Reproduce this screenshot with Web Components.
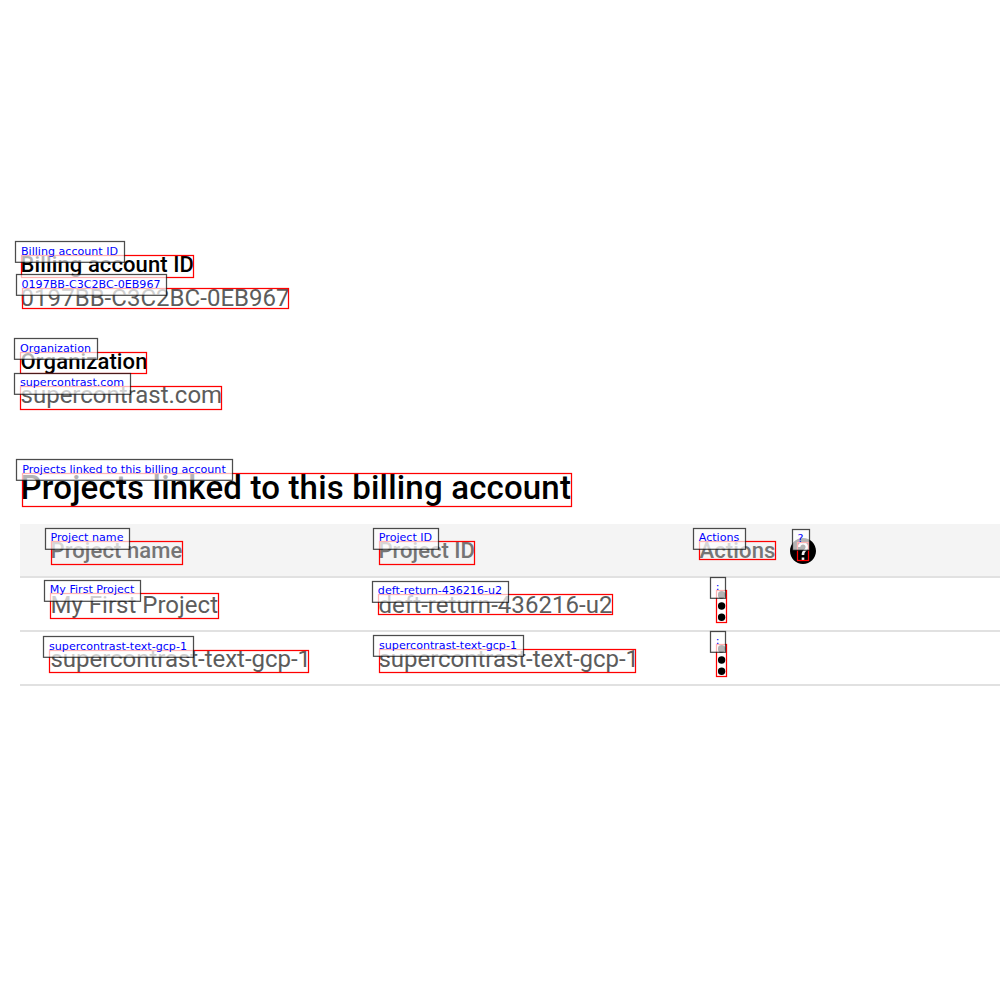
<!DOCTYPE html>
<html lang="en"><head><meta charset="utf-8"><title>Billing account</title>
<style>html,body{margin:0;background:#fff}body{width:1000px;height:1000px;overflow:hidden;position:relative}</style></head>
<body>
<billing-page></billing-page>
<script>
// <ocr-mark>: slotted content plus its detection rectangle and label.
// box = "x,y,w,h"; tag = "x,y,w"; dy = label text shift; w = width of the content.
class OcrMark extends HTMLElement {
  connectedCallback() {
    const [bx, by, bw, bh] = this.getAttribute('box').split(',').map(Number);
    const [tx, ty, tw] = this.getAttribute('tag').split(',').map(Number);
    const dy = Number(this.getAttribute('dy') || 0);
    const label = this.getAttribute('label');
    const root = this.attachShadow({ mode: 'open' });
    root.innerHTML = `<style>
      :host{display:inline-block;justify-self:start;white-space:nowrap}
      .box,.tag{position:absolute;pointer-events:none}
      .box{left:${bx}px;top:${by}px;width:${bw}px;height:${bh}px}
      .tag{left:${tx}px;top:${ty}px;width:${tw}px;height:22px;z-index:2;
        font:400 11.1px/20px "DejaVu Sans",sans-serif;letter-spacing:0;color:#00f}
      .tag span{position:relative;display:block;margin-top:${1 + dy}px;padding-right:1px;text-align:center}
      svg{position:absolute;left:0;top:0;width:100%;height:100%;overflow:visible;display:block}
      rect{fill:none;stroke:#f00;stroke-width:1.25px}
      .tag rect{fill:rgba(255,255,255,.7);stroke:#000;stroke-opacity:.7}
    </style><slot></slot>
    <div class="box"><svg><rect x=".5" y=".5" width="${bw - 1}" height="${bh - 1}"/></svg></div>
    <div class="tag"><svg><rect x=".5" y=".5" width="${tw - 1}" height="20.800"/></svg><span></span></div>`;
    root.querySelector('.tag span').textContent = label;
    const w = this.getAttribute('w');
    if (w) {
      const n = this.textContent.length;
      this.style.letterSpacing = (w - this.getBoundingClientRect().width) / n + 'px';
    }
  }
}
class HelpIcon extends HTMLElement {
  connectedCallback() {
    this.attachShadow({ mode: 'open' }).innerHTML = `<style>:host{display:block;width:26px;height:27px}svg{display:block}</style>
    <svg width="26" height="26" viewBox="2 2 20 20"><path d="M12 2C6.48 2 2 6.48 2 12s4.480 10 10 10 10-4.480 10-10S17.520 2 12 2zm1 17h-2v-2h2v2zm2.070-7.750l-.9.920C13.450 12.900 13 13.500 13 15h-2v-.5c0-1.100.45-2.100 1.170-2.830l1.240-1.260c.37-.36.59-.86.59-1.410 0-1.100-.9-2-2-2s-2 .9-2 2H8c0-2.210 1.790-4 4-4s4 1.790 4 4c0 .88-.36 1.680-.93 2.250z"/></svg>`;
  }
}
class MoreIcon extends HTMLElement {
  connectedCallback() {
    this.attachShadow({ mode: 'open' }).innerHTML = `<style>:host{display:block;width:8px;height:32px}svg{display:block}</style>
    <svg width="8" height="32"><circle cx="3.600" cy="4.800" r="3.700"/><circle cx="3.600" cy="16" r="3.700"/><circle cx="3.600" cy="27.200" r="3.700"/></svg>`;
  }
}
class DetailField extends HTMLElement {
  connectedCallback() {
    this.attachShadow({ mode: 'open' }).innerHTML = `<style>
      :host{display:flex;flex-direction:column;gap:1px;height:97px;box-sizing:border-box}
      .name{font-size:22px;font-weight:500;line-height:30px;height:30px;color:#000}
      .value{font-size:24px;line-height:34px;height:34px;color:#5c5c5c}
    </style><div class="name"><slot name="name"></slot></div><div class="value"><slot name="value"></slot></div>`;
  }
}
class ProjectRow extends HTMLElement {
  connectedCallback() {
    this.attachShadow({ mode: 'open' }).innerHTML = `<style>
      :host{display:grid;grid-template-columns:328px 321px 1fr;align-items:center;height:54px;box-sizing:border-box;
        padding:2px 0 0 30.5px;border-bottom:2px solid #e1e1e1;font-size:24px;line-height:34px;color:#5c5c5c}
      :host([head]){background:#f4f4f4;font-size:22px;font-weight:500;color:#757575}
    </style><slot></slot>`;
  }
}
class BillingPage extends HTMLElement {
  connectedCallback() {
    this.attachShadow({ mode: 'open' }).innerHTML = `<style>
      :host{display:block;box-sizing:border-box;padding:250px 0 0 20px;font-family:Roboto,sans-serif}
      detail-field,h2{padding-left:.6px}
      h2{margin:22px 0 14px;font-size:33px;line-height:44px;height:44px;font-weight:500;color:#000}
      .act{display:flex;align-items:center;gap:14.5px}
      .dots{display:flex;padding:2px 0 0 18.5px}
    </style>
    <detail-field>
      <ocr-mark slot="name" w="173.500" box="21,255,173,23" tag="15,241,110" label="Billing account ID">Billing account ID</ocr-mark>
      <ocr-mark slot="value" w="269" box="22,288,267,21" tag="16,274,151" label="0197BB-C3C2BC-0EB967">0197BB-C3C2BC-0EB967</ocr-mark>
    </detail-field>
    <detail-field>
      <ocr-mark slot="name" w="127" box="20,352,127,22" tag="14,338,84" label="Organization">Organization</ocr-mark>
      <ocr-mark slot="value" w="201.500" box="20,386,202,24" tag="14,373,117" dy="-1" label="supercontrast.com">supercontrast.com</ocr-mark>
    </detail-field>
    <h2><ocr-mark w="550.500" box="22,473,550,34" tag="16,459,217" label="Projects linked to this billing account">Projects linked to this billing account</ocr-mark></h2>
    <div class="table">
      <project-row head>
        <ocr-mark w="132" box="51,541,132,24" tag="45,528,85" dy="-1" label="Project name">Project name</ocr-mark>
        <ocr-mark w="96.500" box="379,541,96,24" tag="373,528,66" dy="-1" label="Project ID">Project ID</ocr-mark>
        <div class="act"><ocr-mark w="76" box="699,541,77,19" tag="693,528,53" dy="-1" label="Actions">Actions</ocr-mark>
        <ocr-mark box="797,542,12,19" tag="792,529,18" dy="-1" label="?"><help-icon></help-icon></ocr-mark></div>
      </project-row>
      <project-row>
        <ocr-mark w="167.500" box="50,593,169,26" tag="44,580,97" dy="-1" label="My First Project">My First Project</ocr-mark>
        <ocr-mark w="234" box="378,594,235,21" tag="372,581,137" dy="-1" label="deft-return-436216-u2">deft-return-436216-u2</ocr-mark>
        <div class="dots"><ocr-mark box="716,590,11,33" tag="710,577,16" dy="-1" label=":"><more-icon></more-icon></ocr-mark></div>
      </project-row>
      <project-row>
        <ocr-mark w="260.500" box="49,650,260,23" tag="43,636,151" label="supercontrast-text-gcp-1">supercontrast-text-gcp-1</ocr-mark>
        <ocr-mark w="260.500" box="379,649,257,24" tag="373,635,151" label="supercontrast-text-gcp-1">supercontrast-text-gcp-1</ocr-mark>
        <div class="dots"><ocr-mark box="716,644,11,33" tag="710,631,16" dy="-1" label=":"><more-icon></more-icon></ocr-mark></div>
      </project-row>
    </div>`;
  }
}
customElements.define('help-icon', HelpIcon);
customElements.define('more-icon', MoreIcon);
customElements.define('detail-field', DetailField);
customElements.define('project-row', ProjectRow);
customElements.define('ocr-mark', OcrMark);
customElements.define('billing-page', BillingPage);
</script>
</body></html>
